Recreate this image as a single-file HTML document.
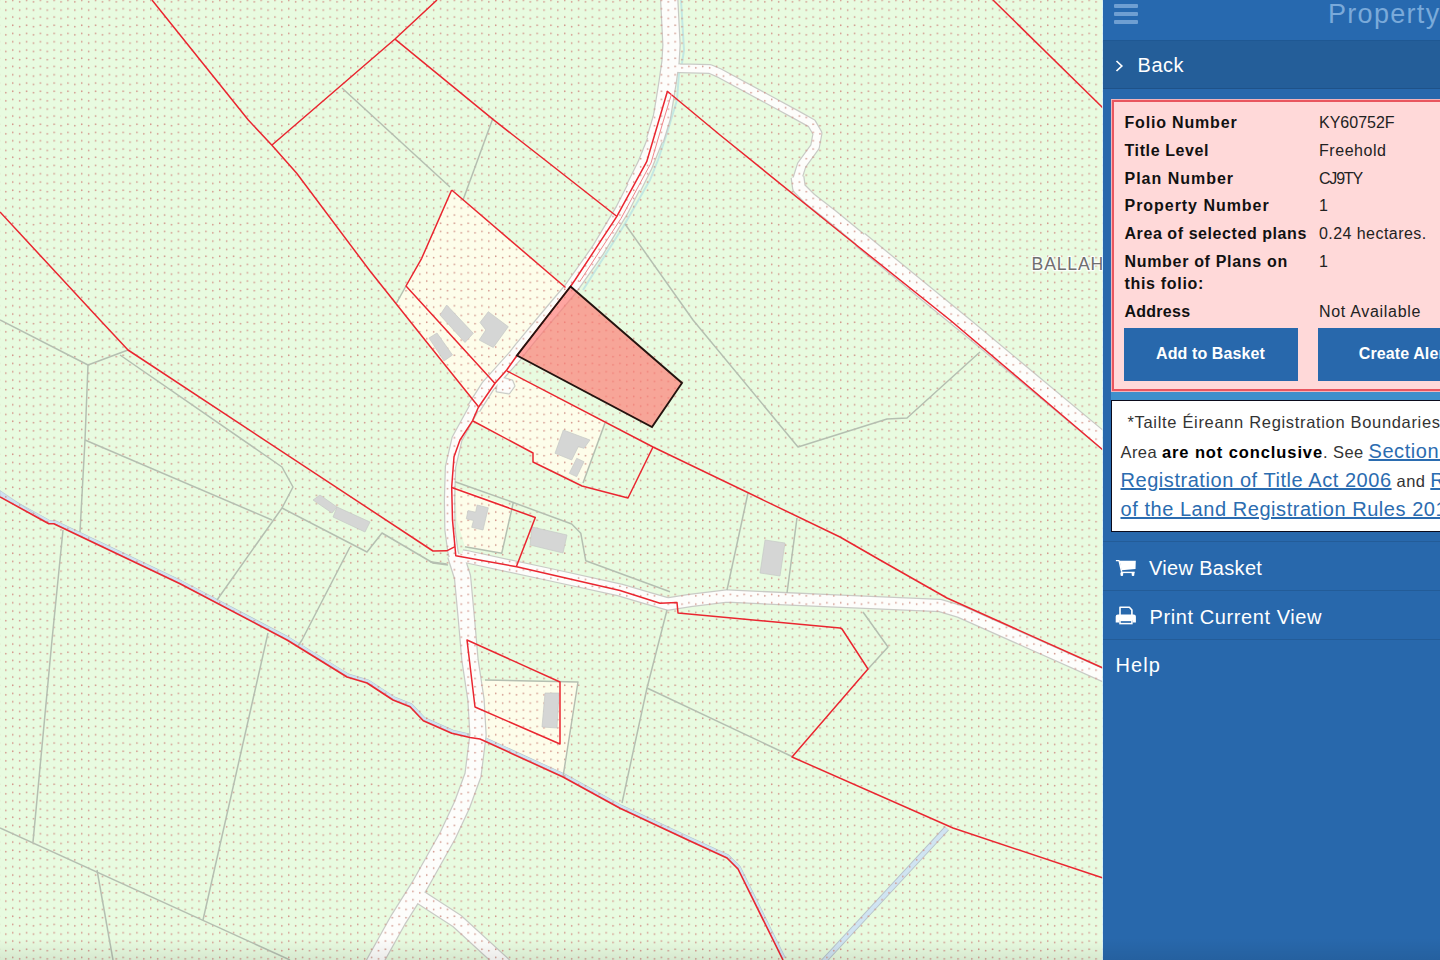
<!DOCTYPE html>
<html>
<head>
<meta charset="utf-8">
<title>Property Map</title>
<style>
html,body{margin:0;padding:0;width:1440px;height:960px;overflow:hidden;}
body{width:1440px;height:960px;overflow:hidden;position:relative;background:#e8fbe0;font-family:"Liberation Sans",sans-serif;}
#map{position:absolute;left:0;top:0;width:1440px;height:960px;display:block;}
#panel{position:absolute;left:1103px;top:0;width:337px;height:960px;background:#2868ac;color:#fff;overflow:hidden;}
#hdr{position:absolute;left:0;top:0;width:460px;height:40px;background:#2769af;border-bottom:1px solid #1f5893;}
#hdr .bars{position:absolute;left:11px;top:4px;width:24px;height:20px;}
#hdr .bars i{position:absolute;left:0;width:24px;height:4px;background:#6f9fd2;border-radius:1px;}
#hdr .ttl{position:absolute;left:225px;top:-3px;font-size:27px;line-height:34px;color:#7aaada;white-space:nowrap;letter-spacing:1.3px;}
#back{position:absolute;left:0;top:41px;width:460px;height:47px;background:#245e99;border-bottom:1px solid #1e5289;}
#back .txt{position:absolute;left:34.5px;top:12px;font-size:20px;line-height:24px;color:#fff;letter-spacing:.55px;}
#back svg{position:absolute;left:12px;top:19px;}
#pink{position:absolute;left:9px;top:100px;width:460px;height:287px;background:#ffd9d9;border:2px solid #e9565f;box-shadow:0 0 0 1px #f3b3ba;}
.row{position:absolute;left:10.5px;font-size:16px;line-height:22px;color:#111;white-space:nowrap;}
.row b{position:absolute;left:0;top:0;font-weight:bold;letter-spacing:0.25px;}
.row span{position:absolute;left:194.5px;top:0;letter-spacing:0.2px;color:#222;}
.btn{position:absolute;top:226px;height:52.5px;width:174px;background:#2868ac;color:#fff;font-size:16px;font-weight:bold;text-align:center;line-height:52px;letter-spacing:0.1px;}
#strip{position:absolute;left:8px;top:392px;width:460px;height:8px;background:#3f8fcb;}
#white{position:absolute;left:8px;top:400px;width:460px;height:130px;background:#fff;border:1.5px solid #0b0b1c;color:#333;}
#white .ln{position:absolute;left:8.5px;white-space:nowrap;font-size:16.5px;line-height:28px;}
#white a{color:#2b6cb0;text-decoration:underline;font-size:20px;letter-spacing:.55px;}
#white b{color:#000;}
.menu{position:absolute;left:0;width:460px;height:48px;border-top:1px solid #235c98;}
.menu .t{position:absolute;left:46px;top:12.5px;font-size:20px;line-height:26px;color:#fff;white-space:nowrap;}
.menu svg{position:absolute;left:12px;top:16.4px;}
</style>
</head>
<body>
<svg id="map" width="1440" height="960" viewBox="0 0 1440 960">
<defs>
<pattern id="dots" x="-3.75" y="3.96" width="13.8" height="8.25" patternUnits="userSpaceOnUse">
<circle cx="2.7" cy="4.8" r="0.82" fill="#d3958b"/>
<circle cx="9.6" cy="6.2" r="0.82" fill="#d3958b"/>
</pattern>
</defs>
<rect x="0" y="0" width="1440" height="960" fill="#e8fbe0"/>
<g fill="#fdfdea">
<path d="M451.7,190 L565,287 L517,356 L507,371 L495,384 L478.3,406.5 L425,340 L396.5,304.5 L406,286 L421.7,258.3 Z"/>
<path d="M507,371 L605,423 L583,483 L533,462 L533,453 L473,421 L478,407 Z"/>
<path d="M455,487 L512,507 L513.5,503 L502,553 L465,547 L457,520 Z"/>
<path d="M480,680.8 L579,681.7 L564,777 L480,739 Z"/>
</g>
<g fill="none" stroke-linecap="butt" stroke-linejoin="round">
<!-- streams -->
<path d="M946.8,828.3 L823,962" stroke="#b7c4ca" stroke-width="5.8"/>
<path d="M946.8,828.3 L823,962" stroke="#d0e4f2" stroke-width="4"/>
<path d="M681,0 L684,50 L682,63 L679,73 L677,100 L667,133 L658,160 L650,180 L623,227 L583,290" stroke="#c3e8e3" stroke-width="2"/>
<path d="M1.0,495.0 L49.8,521.9 L54.8,521.9 L181.0,581.9 L288.0,638.1 L348.0,675.1 L368.0,681.1 L394.0,698.1 L411.0,704.8 L424.3,718.9 L452.7,731.4 L471.0,735.6 L481.0,737.1 L564.0,775.1 L621.0,806.4 L691.0,839.1 L728.0,856.1 L739.0,867.1 L784.0,958.1" stroke="#b5c4cc" stroke-width="3.4"/>
<path d="M1.0,495.0 L49.8,521.9 L54.8,521.9 L181.0,581.9 L288.0,638.1 L348.0,675.1 L368.0,681.1 L394.0,698.1 L411.0,704.8 L424.3,718.9 L452.7,731.4 L471.0,735.6 L481.0,737.1 L564.0,775.1 L621.0,806.4 L691.0,839.1 L728.0,856.1 L739.0,867.1 L784.0,958.1" stroke="#cfe2f1" stroke-width="2.4"/>
<path d="M0,490.5 L0,496.5 L48,523 Z" fill="#cfe2f1" stroke="#b5c4cc" stroke-width="0.6"/>
<!-- road casings -->
<g stroke="#c9cbc6">
<path d="M669,-5 L671.5,45 L670.5,62 L667.5,83 L662,117 L655,140" stroke-width="18.5"/>
<path d="M664,106 L655,140 L645,165 L634,187" stroke-width="16.5"/>
<path d="M662,117 L655,140 L645,165 L622,210 L598,250 L570.5,289 L546,318 L522,347 L515,356 L488,386 L474,408" stroke-width="14.5"/>
<path d="M488,386 L474,408 L457,439 L450.5,467 L449.5,500 L450,530 L453,552 L456,562" stroke-width="11.5"/>
<path d="M455.5,555 L462.5,577 L466.5,620 L470,660 L476,700 L478,735 L473,775 L462,805 L448,835 L420,885 L398,920 L373,965" stroke-width="17.5"/>
<path d="M672,67.8 L680,68.3 L710,69 L720,73.3 L796.7,115 L811.7,123.3 L817.5,133.3 L815,146.7 L801.7,165 L797.5,178.3 L800,190" stroke-width="10"/>
<path d="M797.5,177 L799,188 L810,199 L830,214.5 L875,251.5" stroke-width="14"/>
<path d="M860,239.5 L967,327 L1110,446" stroke-width="16.5"/>
<path d="M462,556 L468,557 L547,574 L620,590 L647,598 L668,604 L690,600.5 L727,596 L830,600.8 L940,605.5 L960,611.5 L1110,678.3" stroke-width="13.5"/>
<path d="M420,897 L457,921 L505,965" stroke-width="15"/>
<path d="M499,377 L512,381 L514,386 L509,393 L497,391 Z" stroke-width="3" fill="#c9cbc6"/>
</g>
<g stroke="#fdfdfb">
<path d="M669,-5 L671.5,45 L670.5,62 L667.5,83 L662,117 L655,140" stroke-width="16"/>
<path d="M664,106 L655,140 L645,165 L634,187" stroke-width="14"/>
<path d="M662,117 L655,140 L645,165 L622,210 L598,250 L570.5,289 L546,318 L522,347 L515,356 L488,386 L474,408" stroke-width="12"/>
<path d="M488,386 L474,408 L457,439 L450.5,467 L449.5,500 L450,530 L453,552 L456,562" stroke-width="9"/>
<path d="M455.5,555 L462.5,577 L466.5,620 L470,660 L476,700 L478,735 L473,775 L462,805 L448,835 L420,885 L398,920 L373,965" stroke-width="15"/>
<path d="M672,67.8 L680,68.3 L710,69 L720,73.3 L796.7,115 L811.7,123.3 L817.5,133.3 L815,146.7 L801.7,165 L797.5,178.3 L800,190" stroke-width="7.6"/>
<path d="M797.5,177 L799,188 L810,199 L830,214.5 L875,251.5" stroke-width="11.5"/>
<path d="M860,239.5 L967,327 L1110,446" stroke-width="14"/>
<path d="M462,556 L468,557 L547,574 L620,590 L647,598 L668,604 L690,600.5 L727,596 L830,600.8 L940,605.5 L960,611.5 L1110,678.3" stroke-width="11"/>
<path d="M420,897 L457,921 L505,965" stroke-width="12.5"/>
<path d="M499,377 L512,381 L514,386 L509,393 L497,391 Z" stroke-width="0.6" fill="#fdfdfb"/>
</g>
</g>
<!--DOTS-->
<rect x="0" y="0" width="1440" height="960" fill="url(#dots)"/>
<g fill="#d5d6d5" stroke="#c6c8c6" stroke-width="0.7">
<path d="M446.7,305 L473.3,333.3 L465,342.5 L440,315 Z"/>
<path d="M488.3,311.7 L508.3,326.7 L493.3,347.5 L479.2,340 L485.8,330 L480,322.5 Z"/>
<path d="M429,338 L437,333 L452.5,355 L444,361 Z"/>
<path d="M563.3,430 L590,440 L584,448.3 L578.3,446.7 L571.7,460 L555,453.3 Z"/>
<path d="M576.7,458.3 L584,461.7 L576.7,476.7 L569.3,473.3 Z"/>
<path d="M477.2,505 L488.3,507.8 L483,530 L471.7,527.3 L473.5,520.5 L466.3,518.8 L468,510.6 L475.6,512.2 Z"/>
<path d="M532,527 L567,535 L563,553 L530,545 Z"/>
<path d="M765,540 L785,543 L780,576 L760,573 Z"/>
<path d="M313,500 L320,495 L337,507 L332,513 Z"/>
<path d="M337,507 L370,522 L365,532 L333,517 Z"/>
<path d="M545,693 L559,693 L557,728 L542,727 Z"/>
</g>
<g fill="none" stroke="#b5bfb1" stroke-width="1.5" stroke-linejoin="round">
<path d="M342,88 L450,187"/>
<path d="M493,118 L463,200"/>
<path d="M406,286 L396.5,303"/>
<path d="M625,224 L693,320 L798,447 L887,419 L907,418 L980,352"/>
<path d="M0,320 L88,365 L128,350"/>
<path d="M88,365 L85,440 L80,532"/>
<path d="M120,355 L282,467 L293,487 L282,508 L217,600"/>
<path d="M85,440 L272,520"/>
<path d="M282,508 L367,552 L382,533 L433,563 L448,565"/>
<path d="M350,547 L302,640 L298,646"/>
<path d="M63,530 L52,640 L33,842"/>
<path d="M0,828 L290,960"/>
<path d="M97,870 L113,960"/>
<path d="M268,633 L203,920"/>
<path d="M605,423 L583,483"/>
<path d="M748,493 L727,590"/>
<path d="M797,518 L787,593"/>
<path d="M667,610 L647,688 L622,803"/>
<path d="M647,688 L793,757"/>
<path d="M863,612 L888,647 L868,669"/>
<path d="M485,680 L578,682 L563,777"/>
<path d="M455,481.7 L513.3,502.5 L571.7,524 L580.8,533.3 L585.8,560.8 L670,591.7"/>
<path d="M513.3,502.5 L501.7,553.3 L465,546.7"/>
<path d="M430,561.7 L446.7,564"/>
</g>
<g fill="none" stroke="#ea2630" stroke-width="1.5" stroke-linejoin="round">
<path d="M152,0 L248.3,120 L271.7,145 L296.7,173.3 L370,271 L425,340 L478.3,406.5"/>
<path d="M437,0 L395,39 L272,145"/>
<path d="M395,39.2 L493.3,119.7 L545,160 L617,216.5"/>
<path d="M451.7,190 L565.5,287.5"/>
<path d="M451.7,190 L421.7,258.3 L406,286 L495,383.5"/>
<path d="M0,212 L100,320 L128,350 L433,551 L446.7,550.8 L455,546.7"/>
<path d="M993,0 L1103,108"/>
<path d="M667,91 L720,135 L840,232 L950,320 L1103,450"/>
<path d="M667.5,91 L659,120 L646.7,161.7 L616.7,216.7 L575,280 L570.5,286.5 L517,355.5 L506.7,370 L495,383.3 L478.3,407.5 L472.5,420.8 L460,440 L454,456.7 L451.7,487 L452.5,520 L455.8,555.8 L516.7,566.7 L620,590.5 L660,603.3 L677,602.5 L678,613 L840,628 L842,629 L868,669 L792,757 L953,828 L1103,878" stroke-width="1.5"/>
<path d="M671.5,94 L663,122 L651,163 L621,218.5 L579.5,282" stroke="#f0868c" stroke-width="1"/>
<path d="M507,371 L653,447 L840,537 L880,560 L947,598 L1103,668"/>
<path d="M653,447 L628,498 L582,486 L533,462 L533,453 L473,421"/>
<path d="M451.7,487.5 L535.3,517.5 L516.3,566.7"/>
<path d="M467,640 L560,682 L560,744 L475,707 Z"/>
<path d="M0.0,496.9 L48.8,523.8 L53.8,523.8 L180.0,583.8 L287.0,640.0 L347.0,677.0 L367.0,683.0 L393.0,700.0 L410.0,706.7 L423.3,720.8 L451.7,733.3 L470.0,737.5 L480.0,739.0 L563.0,777.0 L620.0,808.3 L690.0,841.0 L727.0,858.0 L738.0,869.0 L783.0,960.0" stroke-width="1.6"/>
</g>
<path d="M570.5,286.5 L682,383 L652,427 L517,355.5 Z" fill="rgba(255,120,114,0.66)" stroke="#24130f" stroke-width="1.9" stroke-linejoin="miter"/>
<text x="1031.6" y="269.8" font-family="Liberation Sans, sans-serif" font-size="17.6" fill="#6f6f6f" stroke="#ffffff" stroke-opacity="0.85" stroke-width="2.6" stroke-linejoin="round" paint-order="stroke" letter-spacing="0.83">BALLAH</text>
</svg>
<div id="panel">
<div id="hdr">
<div class="bars"><i style="top:0"></i><i style="top:8px"></i><i style="top:16px"></i></div>
<div class="ttl">Property Details</div>
</div>
<div id="back">
<svg width="9" height="12" viewBox="0 0 9 12"><path d="M1.5,1 L6.8,6 L1.5,11" fill="none" stroke="#fff" stroke-width="1.7"/></svg>
<div class="txt">Back</div>
</div>
<div id="pink">
<div class="row" style="top:10px"><b style="letter-spacing:.82px">Folio Number</b><span style="letter-spacing:0">KY60752F</span></div>
<div class="row" style="top:37.8px"><b style="letter-spacing:.61px">Title Level</b><span style="letter-spacing:.55px">Freehold</span></div>
<div class="row" style="top:65.5px"><b style="letter-spacing:.98px">Plan Number</b><span style="letter-spacing:-1.2px">CJ9TY</span></div>
<div class="row" style="top:93.2px"><b style="letter-spacing:.96px">Property Number</b><span>1</span></div>
<div class="row" style="top:121px"><b style="letter-spacing:.57px">Area of selected plans</b><span style="letter-spacing:.44px">0.24 hectares.</span></div>
<div class="row" style="top:148.7px"><b style="letter-spacing:.68px;line-height:22.4px">Number of Plans on<br>this folio:</b><span>1</span></div>
<div class="row" style="top:198.5px"><b style="letter-spacing:.25px">Address</b><span style="letter-spacing:.69px">Not Available</span></div>
<div class="btn" style="left:9.5px">Add to Basket</div>
<div class="btn" style="left:203.5px">Create Alert</div>
</div>
<div id="strip"></div>
<div id="white">
<div class="ln" style="top:7px;left:15.5px;letter-spacing:.67px">*Tailte &Eacute;ireann Registration Boundaries and</div>
<div class="ln" style="top:35.8px;letter-spacing:.4px">Area <b style="letter-spacing:.9px">are not conclusive</b>. See <a>Section 62 of the</a></div>
<div class="ln" style="top:64.8px;letter-spacing:.4px"><a>Registration of Title Act 2006</a> and <a>Rule 8</a></div>
<div class="ln" style="top:94.3px;letter-spacing:.4px"><a>of the Land Registration Rules 2012</a></div>
</div>
<div class="menu" style="top:541px">
<svg style="top:16.9px" width="22" height="18" viewBox="0 0 22 18"><path d="M0.9,0.9 L4.3,0.9 L4.9,1.9 L7.4,12.8 L5.9,12.8 L3.5,2.3 L0.9,2.3 Z" fill="#fff"/><path d="M4.6,1.7 L20.8,1.7 L20.5,9.9 L6.6,11.2 Z" fill="#fff"/><rect x="5.9" y="12.7" width="13.8" height="1.4" fill="#fff"/><rect x="5.5" y="13.2" width="2.6" height="3.7" rx="1" fill="#fff"/><rect x="16.7" y="13.2" width="2.6" height="3.7" rx="1" fill="#fff"/></svg>
<div class="t" style="letter-spacing:.32px">View Basket</div>
</div>
<div class="menu" style="top:590px">
<svg style="top:15.3px" width="22" height="19" viewBox="0 0 22 19"><path d="M5,9 L5,1.2 L14.4,1.2 L16.9,4 L16.9,9" fill="none" stroke="#fff" stroke-width="1.6" stroke-linejoin="round"/><path d="M0.7,10.6 Q0.7,8.4 2.9,8.4 L18.7,8.4 Q20.9,8.4 20.9,10.6 L20.9,16.6 L17.6,16.6 L17.6,14.2 L4.25,14.2 L4.25,16.6 L0.7,16.6 Z" fill="#fff"/><rect x="5" y="14.4" width="11.9" height="3.2" fill="none" stroke="#fff" stroke-width="1.5"/></svg>
<div class="t" style="letter-spacing:.59px;left:46.5px">Print Current View</div>
</div>
<div class="menu" style="top:639px">
<div class="t" style="left:12.5px;top:12px;letter-spacing:1.1px">Help</div>
</div>
</div>
<div style="position:absolute;left:1102px;top:0;width:1px;height:960px;background:#d9f3f8;opacity:.85"></div>
<div style="position:absolute;left:0;top:938px;width:1440px;height:22px;background:linear-gradient(to bottom,rgba(0,0,0,0),rgba(0,0,0,0.075))"></div>
</body>
</html>
